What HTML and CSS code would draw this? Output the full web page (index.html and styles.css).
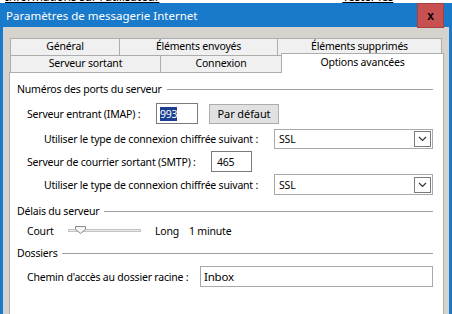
FILE: index.html
```html
<!DOCTYPE html>
<html lang="fr">
<head>
    <meta charset="UTF-8">
    <title>Paramètres de messagerie Internet</title>
    <link rel="stylesheet" href="styles.css">
</head>
<body>
    <div class="behind">
        <span class="behind-left">Informations sur l'utilisateur</span>
        <span class="behind-right">Tester les paramètres</span>
    </div>

    <div class="window">
        <div class="titlebar">
            <span class="title">Paramètres de messagerie Internet</span>
            <span class="close">x</span>
        </div>

        <div class="dialog">
            <div class="tabs">
                <div class="tab-row">
                    <div class="tab t-general">Général</div>
                    <div class="tab t-sent">Éléments envoyés</div>
                    <div class="tab t-deleted">Éléments supprimés</div>
                </div>
                <div class="tab-row">
                    <div class="tab t-outgoing">Serveur sortant</div>
                    <div class="tab t-conn">Connexion</div>
                    <div class="tab active">Options avancées</div>
                </div>
            </div>

            <div class="panel">
                <div class="group g-ports">Numéros des ports du serveur</div>

                <div class="row r-imap">
                    <label class="lbl w-imap">Serveur entrant (IMAP) :</label>
                    <div class="field f-port"><span class="sel">993</span></div>
                    <button class="btn">Par défaut</button>
                </div>

                <div class="row r-enc1 sub">
                    <label class="lbl w-enc">Utiliser le type de connexion chiffrée suivant :</label>
                    <div class="combo">
                        <span>SSL</span>
                        <span class="drop">
                            <svg width="9" height="6" viewBox="0 0 9 6"><path d="M1 1 L4.5 4.5 L8 1" fill="none" stroke="#333" stroke-width="1.2"/></svg>
                        </span>
                    </div>
                </div>

                <div class="row r-smtp">
                    <label class="lbl w-smtp">Serveur de courrier sortant (SMTP) :</label>
                    <div class="field f-port2">465</div>
                </div>

                <div class="row r-enc2 sub">
                    <label class="lbl w-enc">Utiliser le type de connexion chiffrée suivant :</label>
                    <div class="combo">
                        <span>SSL</span>
                        <span class="drop">
                            <svg width="9" height="6" viewBox="0 0 9 6"><path d="M1 1 L4.5 4.5 L8 1" fill="none" stroke="#333" stroke-width="1.2"/></svg>
                        </span>
                    </div>
                </div>

                <div class="group g-delay">Délais du serveur</div>

                <div class="row r-slider">
                    <span class="lbl w-court">Court</span>
                    <div class="slider">
                        <div class="track"></div>
                        <svg class="thumb" width="11" height="8" viewBox="0 0 11 8"><path d="M0.5 0.5 H10.5 V3.5 L5.5 7.5 L0.5 3.5 Z" fill="#f4f4f4" stroke="#8a8a8a"/></svg>
                    </div>
                    <span class="lbl w-long">Long</span>
                    <span class="lbl">1 minute</span>
                </div>

                <div class="group g-folders">Dossiers</div>

                <div class="row r-path">
                    <label class="lbl w-path">Chemin d'accès au dossier racine :</label>
                    <div class="field f-path">Inbox</div>
                </div>
            </div>
        </div>
    </div>
</body>
</html>
```

FILE: styles.css
```css
body {
    margin: 0;
    background-color: #fff;
    font-family: "Noto Sans", "DejaVu Sans", sans-serif;
    font-size: 10.5px;
    letter-spacing: -0.2px;
    color: #000;
    overflow: hidden;
}

.behind {
    height: 3px;
    overflow: hidden;
    display: flex;
    font-size: 12px;
    line-height: 14px;
}

.behind span {
    margin-top: -10px;
    text-decoration: underline;
}

.behind-left {
    margin-left: 5px;
    width: 360px;
}

.window {
    background-color: #1979ca;
    padding: 0 3px;
    height: 311px;
    overflow: hidden;
}

.titlebar {
    height: 24px;
    display: flex;
    justify-content: space-between;
}

.title {
    color: #fff;
    font-size: 11.5px;
    letter-spacing: 0;
    padding: 5px 0 0 3px;
}

.close {
    width: 27px;
    height: 25px;
    margin-right: 5px;
    background-color: #c75050;
    border: 1px solid #a84040;
    box-sizing: border-box;
    display: flex;
    align-items: center;
    justify-content: center;
    font-weight: bold;
    font-size: 12px;
    letter-spacing: 0;
    font-family: "Liberation Sans", Arial, sans-serif;
}

.dialog {
    background-color: #d6d3ce;
    height: 287px;
    overflow: hidden;
    padding: 11px 0 0 6px;
    box-sizing: border-box;
}

.tab-row {
    display: flex;
    padding-left: 1px;
    height: 17px;
}

.tab {
    box-sizing: border-box;
    height: 17px;
    border: 1px solid #adadad;
    border-bottom: none;
    background-color: #f0f0f0;
    text-align: center;
    line-height: 15px;
    margin-right: -1px;
}

.t-general { width: 110px; }
.t-sent { width: 159px; }
.t-deleted { width: 165px; }
.t-outgoing { width: 151px; }
.t-conn { width: 122px; }

.tab.active {
    width: 163px;
    height: 20px;
    margin-top: -2px;
    background-color: #fff;
    position: relative;
    z-index: 1;
    line-height: 16px;
}

.panel {
    width: 435px;
    height: 250px;
    box-sizing: border-box;
    border: 1px solid #adadad;
    background-color: #fff;
    padding: 8px 10px 0 7px;
}

.group {
    display: flex;
    align-items: center;
    height: 16px;
}

.group::after {
    content: "";
    flex: 1;
    border-top: 1px solid #a0a0a0;
    margin-left: 5px;
}

.row {
    display: flex;
    align-items: center;
    padding-left: 10px;
}

.row.sub {
    padding-left: 27px;
}

.lbl {
    white-space: nowrap;
}

.w-imap { width: 129px; }
.w-enc { width: 230px; }
.w-smtp { width: 184px; }
.w-path { width: 173px; }
.w-court { width: 41px; }
.w-long { width: 34px; }

.r-imap { margin-top: 6px; height: 21px; }
.r-enc1 { margin-top: 5px; height: 20px; }
.r-smtp { margin-top: 2px; height: 21px; }
.r-enc2 { margin-top: 2px; height: 21px; }
.g-delay { margin-top: 8px; }
.r-slider { margin-top: 4px; height: 16px; }
.g-folders { margin-top: 6px; }
.r-path { margin-top: 5px; height: 21px; }

.field {
    box-sizing: border-box;
    height: 21px;
    border: 1px solid #7a7a7a;
    background-color: #fff;
    display: flex;
    align-items: center;
    padding-left: 4px;
}

.f-port { width: 42px; padding-left: 3px; }
.f-port2 { width: 41px; padding-left: 5px; }

.f-path {
    width: 233px;
    border-color: #a9a9a9;
    padding-left: 3px;
    font-size: 11.5px;
}

.sel {
    background-color: #1c3f8f;
    color: #fff;
    line-height: 14px;
}

.btn {
    margin-left: 11px;
    width: 70px;
    height: 20px;
    box-sizing: border-box;
    border: 1px solid #adadad;
    background-color: #e1e1e1;
    font-family: inherit;
    font-size: 11px;
    letter-spacing: -0.1px;
    padding: 0;
}

.combo {
    box-sizing: border-box;
    width: 159px;
    height: 20px;
    border: 1px solid #a9a9a9;
    display: flex;
    align-items: center;
    justify-content: space-between;
    padding: 0 1px 0 4px;
}

.r-enc2 .combo { height: 21px; }

.drop {
    box-sizing: border-box;
    width: 17px;
    height: 16px;
    border: 1px solid #7a7a7a;
    display: flex;
    align-items: center;
    justify-content: center;
}

.slider {
    position: relative;
    width: 87px;
    height: 16px;
}

.track {
    position: absolute;
    left: 0;
    top: 6px;
    width: 73px;
    height: 3px;
    border: 1px solid #c4c4c4;
    background-color: #e7e7e7;
    box-sizing: border-box;
}

.thumb {
    position: absolute;
    left: 7px;
    top: 3px;
}
```
